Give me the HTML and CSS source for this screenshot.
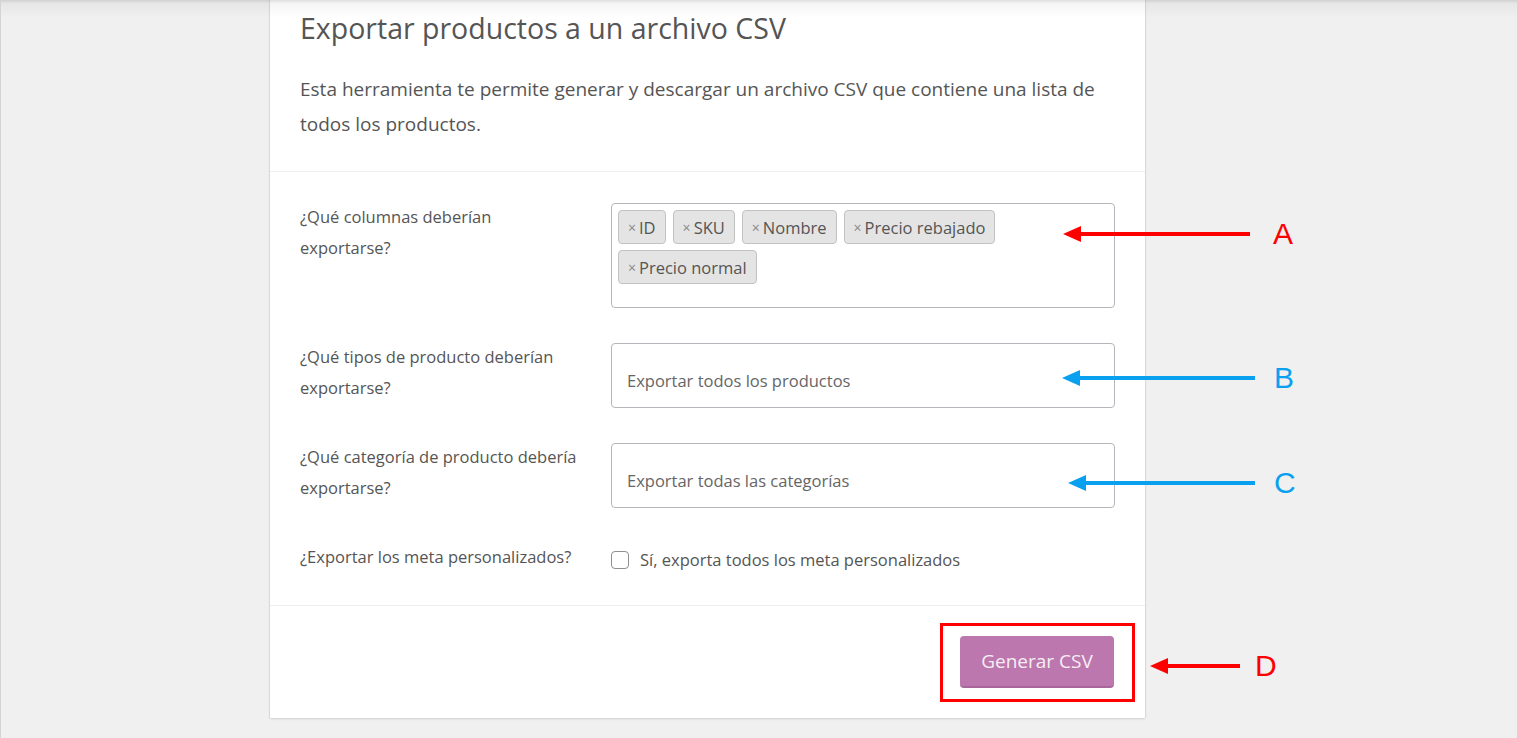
FILE: index.html
```html
<!DOCTYPE html>
<html lang="es">
<head>
    <meta charset="UTF-8">
    <meta name="viewport" content="width=device-width, initial-scale=1.0">
    <title>Exportar productos</title>
    <link rel="stylesheet" href="styles.css">
</head>
<body>
    <div class="page">
        <div class="top-shade"></div>

        <div class="export-card">
            <div class="card-header">
                <h2 class="card-title">Exportar productos a un archivo CSV</h2>
                <p class="card-desc">Esta herramienta te permite generar y descargar un archivo CSV que contiene una lista de todos los productos.</p>
            </div>

            <div class="card-form">
                <div class="form-row">
                    <label class="row-label">¿Qué columnas deberían<br>exportarse?</label>
                    <div class="row-field">
                        <div class="tag-box">
                            <span class="tag"><span class="tag-x">×</span>ID</span>
                            <span class="tag"><span class="tag-x">×</span>SKU</span>
                            <span class="tag"><span class="tag-x">×</span>Nombre</span>
                            <span class="tag"><span class="tag-x">×</span>Precio rebajado</span>
                            <span class="tag"><span class="tag-x">×</span>Precio normal</span>
                        </div>
                    </div>
                </div>

                <div class="form-row">
                    <label class="row-label">¿Qué tipos de producto deberían<br>exportarse?</label>
                    <div class="row-field">
                        <div class="select-box">Exportar todos los productos</div>
                    </div>
                </div>

                <div class="form-row">
                    <label class="row-label">¿Qué categoría de producto debería<br>exportarse?</label>
                    <div class="row-field">
                        <div class="select-box">Exportar todas las categorías</div>
                    </div>
                </div>

                <div class="form-row check-row">
                    <label class="row-label">¿Exportar los meta personalizados?</label>
                    <div class="row-field">
                        <label class="check-label"><span class="check-box"></span>Sí, exporta todos los meta personalizados</label>
                    </div>
                </div>
            </div>

            <div class="card-footer">
                <span class="btn-frame">
                    <button class="generate-btn">Generar CSV</button>
                </span>
            </div>
        </div>

        <!-- annotations -->
        <div class="note note-a">
            <svg width="190" height="20" viewBox="0 0 190 20"><path d="M16 10H187" stroke="#ff0000" stroke-width="4"/><path d="M0 10L18 2V18Z" fill="#ff0000"/></svg>
            <span class="note-letter red">A</span>
        </div>
        <div class="note note-b">
            <svg width="195" height="20" viewBox="0 0 195 20"><path d="M16 10H193" stroke="#0aa0f0" stroke-width="4"/><path d="M0 10L18 2V18Z" fill="#0aa0f0"/></svg>
            <span class="note-letter blue">B</span>
        </div>
        <div class="note note-c">
            <svg width="189" height="20" viewBox="0 0 189 20"><path d="M16 10H187" stroke="#0aa0f0" stroke-width="4"/><path d="M0 10L18 2V18Z" fill="#0aa0f0"/></svg>
            <span class="note-letter blue">C</span>
        </div>
        <div class="note note-d">
            <svg width="92" height="20" viewBox="0 0 92 20"><path d="M16 10H90" stroke="#ff0000" stroke-width="4"/><path d="M0 10L18 2V18Z" fill="#ff0000"/></svg>
            <span class="note-letter red">D</span>
        </div>
    </div>
</body>
</html>
```

FILE: styles.css
```css
* {
    box-sizing: border-box;
    margin: 0;
    padding: 0;
}

body {
    font-family: "Open Sans", Arial, sans-serif;
    background-color: #f0f0f0;
    color: #555;
    height: 738px;
    overflow: hidden;
}

.page {
    position: relative;
    height: 738px;
    padding-left: 270px;
    border-left: 1px solid #d4d4d4;
}

.top-shade {
    position: absolute;
    top: 0;
    left: 0;
    right: 0;
    height: 18px;
    background: linear-gradient(rgba(0,0,0,0.13), rgba(0,0,0,0.04) 20%, rgba(0,0,0,0));
    z-index: 5;
}

.export-card {
    width: 875px;
    margin-left: -1px;
    background: white;
    box-shadow: 0 1px 2px rgba(0,0,0,0.12), 1px 0 1px rgba(0,0,0,0.05), -1px 0 1px rgba(0,0,0,0.05);
}

.card-header {
    padding: 10px 30px 29px;
    border-bottom: 1px solid #eeeeee;
}

.card-title {
    font-size: 28.5px;
    font-weight: 400;
    line-height: 36px;
    color: #555;
    margin-bottom: 26px;
}

.card-desc {
    font-size: 19px;
    line-height: 35px;
    color: #555;
}

.card-form {
    padding: 31px 30px 33px;
    display: flex;
    flex-direction: column;
    gap: 35px;
    border-bottom: 1px solid #eeeeee;
}

.form-row {
    display: flex;
}

.row-label {
    width: 311px;
    padding-right: 10px;
    margin-top: -2px;
    font-size: 16.5px;
    line-height: 31px;
    color: #555;
}

.row-field {
    width: 504px;
}

.tag-box {
    height: 105px;
    border: 1px solid #b3b6ba;
    border-radius: 4px;
    padding: 6px 6px;
    display: flex;
    flex-wrap: wrap;
    align-content: flex-start;
    gap: 6px 7px;
}

.tag {
    display: inline-flex;
    align-items: center;
    height: 34px;
    padding: 0 9px 0 9px;
    background: #e4e4e4;
    border: 1px solid #c2c2c2;
    border-radius: 4px;
    font-size: 16.5px;
    color: #555;
}

.tag-x {
    font-size: 14px;
    color: #888;
    margin-right: 3px;
}

.select-box {
    height: 65px;
    border: 1px solid #b3b6ba;
    border-radius: 4px;
    padding: 9px 15px 0;
    display: flex;
    align-items: center;
    font-size: 16.5px;
    color: #666;
}

.check-row .row-field {
    padding-top: 8px;
}

.check-label {
    display: flex;
    align-items: center;
    font-size: 16.5px;
    color: #555;
    line-height: 18px;
}

.check-box {
    width: 18px;
    height: 18px;
    border: 1px solid #8c8f94;
    border-radius: 4px;
    margin-right: 11px;
    background: white;
}

.card-footer {
    padding: 30px 31px 30px;
    display: flex;
    justify-content: flex-end;
}

.btn-frame {
    position: relative;
    display: inline-block;
}

/* red highlight around the button */
.btn-frame::after {
    content: "";
    position: absolute;
    top: -13px;
    bottom: -14px;
    left: -20px;
    right: -21px;
    border: 3px solid #ff0000;
}

.generate-btn {
    display: block;
    width: 154px;
    height: 52px;
    background-color: #bc77ae;
    border: none;
    border-bottom: 2px solid #a9669b;
    border-radius: 4px;
    color: #f6eef4;
    font-family: "Open Sans", Arial, sans-serif;
    font-size: 19px;
    cursor: pointer;
}

.note {
    position: absolute;
    display: flex;
    align-items: center;
}

.note svg {
    display: block;
}

.note-letter {
    font-family: "Liberation Sans", Arial, sans-serif;
    font-size: 30px;
    line-height: 30px;
}

.red {
    color: #ff0000;
}

.blue {
    color: #0aa0f0;
}

.note-a {
    left: 1062px;
    top: 219px;
}

.note-a .note-letter {
    margin-left: 20px;
}

.note-b {
    left: 1061px;
    top: 363px;
}

.note-b .note-letter {
    margin-left: 17px;
}

.note-c {
    left: 1067px;
    top: 468px;
}

.note-c .note-letter {
    margin-left: 17px;
}

.note-d {
    left: 1149px;
    top: 651px;
}

.note-d .note-letter {
    margin-left: 13px;
}
```
